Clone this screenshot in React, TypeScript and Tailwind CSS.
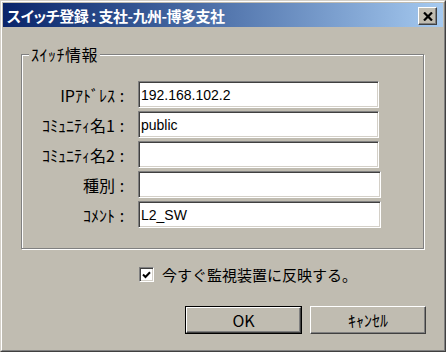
import React from "react";

const JP = "font-['MS_UI_Gothic','Noto_Sans_CJK_JP',sans-serif]";

const FIELDS = [
  { label: "IPｱﾄﾞﾚｽ", value: "192.168.102.2", w: "w-[241px]" },
  { label: "ｺﾐｭﾆﾃｨ名1", value: "public", w: "w-[241px]" },
  { label: "ｺﾐｭﾆﾃｨ名2", value: "", w: "w-[241px]" },
  { label: "種別", value: "", w: "w-[243px]" },
  { label: "ｺﾒﾝﾄ", value: "L2_SW", w: "w-[243px]" },
];

function Field({ label, value, w }: { label: string; value: string; w: string }) {
  return (
    <div className="flex items-center h-[27px]">
      <span className={`w-[93px] text-right text-[16px] leading-none text-black ${JP}`}>{label}</span>
      <span className={`w-[10px] ml-[2px] text-center text-[16px] leading-none text-black ${JP}`}>:</span>
      <div
        className={`ml-[11px] h-[27px] ${w} bg-white border border-t-[#808080] border-l-[#808080] border-r-white border-b-white shadow-[inset_1px_1px_0_#404040,inset_-1px_-1px_0_#d4d0c8] flex items-center pl-[2px]`}
      >
        <span className="font-['Liberation_Sans',Arial,sans-serif] text-[14px] leading-none text-black">{value}</span>
      </div>
    </div>
  );
}

function Button({ children, isDefault }: { children: React.ReactNode; isDefault?: boolean }) {
  return (
    <div className={`h-[28px] ${isDefault ? "w-[117px] border border-black" : "w-[116px]"} bg-[#c0bcb1]`}>
      <div className="h-full w-full border border-t-white border-l-white border-r-[#404040] border-b-[#404040] shadow-[inset_-1px_-1px_0_#808080] flex items-center justify-center">
        <span className={`text-[16px] leading-none text-black ${JP}`}>{children}</span>
      </div>
    </div>
  );
}

export default function App() {
  return (
    <div className="w-[446px] h-[352px] bg-[#c0bcb1] border border-t-[#d4d0c8] border-l-[#d4d0c8] border-r-[#404040] border-b-[#404040]">
      <div className="h-full w-full border border-t-white border-l-white border-r-[#808080] border-b-[#808080] p-px flex flex-col">
        {/* Title bar */}
        <div className="h-[24px] flex items-center bg-gradient-to-r from-[#0a246a] to-[#a6caf0] pl-[4px] pr-[6px]">
          <span
            className={`text-white font-bold text-[15px] leading-none tracking-[-0.5px] [font-feature-settings:'palt'] ${JP}`}
          >
            スイッチ登録 : 支社-九州-博多支社
          </span>
          <div className="ml-auto w-[19px] h-[18px] mt-[2px] bg-[#c0bcb1] border border-t-white border-l-white border-r-[#404040] border-b-[#404040] shadow-[inset_-1px_-1px_0_#808080] flex items-center justify-center">
            <svg width="10" height="9" viewBox="0 0 10 9">
              <path d="M1 0.5 L9 8.5 M9 0.5 L1 8.5" stroke="#000" strokeWidth="2.2" />
            </svg>
          </div>
        </div>

        {/* Body */}
        <div className="flex-1 flex flex-col pl-[18px] pt-[27px]">
          <div className="relative w-[403px] h-[195px] border border-[#808080] shadow-[inset_1px_1px_0_#fff,1px_1px_0_#fff] pt-[26px]">
            <span
              className={`absolute left-[7px] top-[-9px] px-[2px] bg-[#c0bcb1] text-[16px] leading-none tracking-[0.5px] text-black ${JP}`}
            >
              ｽｲｯﾁ情報
            </span>
            <div className="flex flex-col gap-[3px]">
              {FIELDS.map((f) => (
                <Field key={f.label} {...f} />
              ))}
            </div>
          </div>

          {/* Checkbox */}
          <div className="flex items-center mt-[18px] ml-[118px]">
            <div className="w-[15px] h-[15px] bg-white border border-t-[#808080] border-l-[#808080] border-r-white border-b-white shadow-[inset_1px_1px_0_#404040,inset_-1px_-1px_0_#d4d0c8] flex items-center justify-center">
              <svg width="9" height="8" viewBox="0 0 9 8">
                <path d="M1 3.5 L3.5 6 L8 1.2" stroke="#000" strokeWidth="2" fill="none" />
              </svg>
            </div>
            <span className={`ml-[8px] text-[15px] leading-none text-black ${JP}`}>今すぐ監視装置に反映する。</span>
          </div>

          {/* Buttons */}
          <div className="flex gap-[8px] mt-[24px] ml-[164px]">
            <Button isDefault>OK</Button>
            <Button>ｷｬﾝｾﾙ</Button>
          </div>
        </div>
      </div>
    </div>
  );
}
